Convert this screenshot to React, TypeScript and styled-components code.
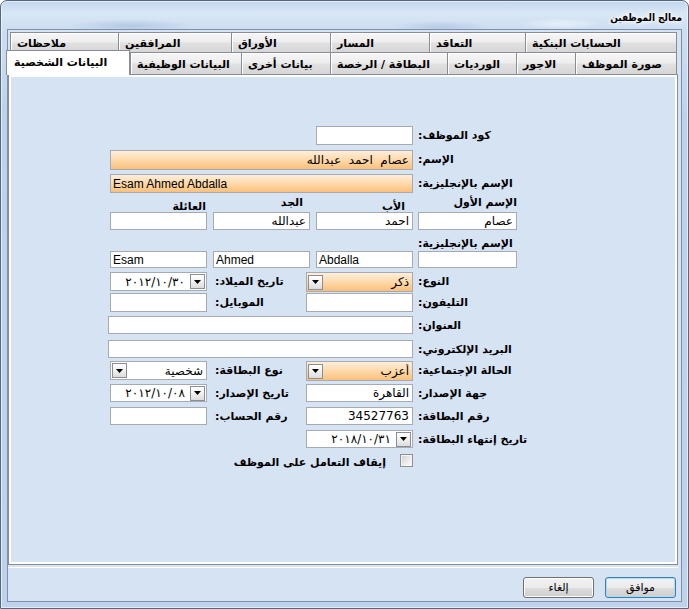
import React from "react";
import styled, { createGlobalStyle } from "styled-components";

const Global = createGlobalStyle`
  html, body { margin: 0; padding: 0; width: 689px; height: 609px; overflow: hidden; background: #fff; }
  body { font-family: "DejaVu Sans", sans-serif; }
  *, *::before, *::after { box-sizing: border-box; }
`;

const orange = "linear-gradient(180deg, #feeedb 0%, #fdd9ab 50%, #fbc07a 100%)";
const arabic = `"DejaVu Sans", sans-serif`;

const Window = styled.div`
  width: 689px;
  height: 609px;
  border: 1px solid #56677f;
  border-radius: 7px 7px 0 0;
  padding: 0 6px 6px 6px;
  display: flex;
  flex-direction: column;
  box-shadow: inset 0 0 0 1px rgba(255, 255, 255, 0.55);
  background:
    radial-gradient(ellipse 90px 10px at 130px 25px, rgba(110, 140, 185, 0.28), transparent 70%),
    radial-gradient(ellipse 70px 9px at 440px 26px, rgba(110, 140, 185, 0.25), transparent 70%),
    radial-gradient(ellipse 60px 8px at 560px 23px, rgba(255, 255, 255, 0.5), transparent 70%),
    linear-gradient(180deg, #c1d6ee 0px, #d9e7f6 12px, #cddef1 28px, #bcd2ea 120px, #bed3eb 100%);
`;

const TitleBar = styled.div`
  height: 28px;
  flex: 0 0 28px;
  display: flex;
  justify-content: flex-end;
  align-items: center;
  padding-top: 5px;
`;

const Title = styled.span`
  font: bold 10px "DejaVu Sans Condensed", "DejaVu Sans", sans-serif;
  font-stretch: condensed;
  color: #000;
  direction: rtl;
  text-shadow: 0 0 6px #fff, 0 0 4px #fff, 0 0 2px #fff;
`;

const Client = styled.div`
  flex: 1;
  border: 1px solid #7d8fa9;
  background: #d6e3f3;
  display: flex;
  flex-direction: column;
  padding: 2px 3px 0 0;
`;

const TabControl = styled.div`
  flex: 1;
  display: flex;
  flex-direction: column;
`;

const TabRow = styled.div<{ $h: number; $ml: number }>`
  display: flex;
  height: ${p => p.$h}px;
  flex: 0 0 ${p => p.$h}px;
  margin-left: ${p => p.$ml}px;
  & > *:last-child { border-right-width: 1px; }
`;

const Tab = styled.div<{ $w: number; $active?: boolean }>`
  position: relative;
  width: ${p => p.$w + (p.$active ? 2 : 0)}px;
  flex: 0 0 auto;
  height: ${p => (p.$active ? "25px" : "100%")};
  margin-left: ${p => (p.$active ? -2 : 0)}px;
  margin-top: ${p => (p.$active ? -2 : 0)}px;
  z-index: ${p => (p.$active ? 2 : 1)};
  border: solid #898c95;
  border-width: 1px 0 0 1px;
  border-right-width: ${p => (p.$active ? 1 : 0)}px;
  background: ${p =>
    p.$active
      ? "#fff"
      : "linear-gradient(180deg, #f6f6f6 0%, #eeeeee 45%, #e0e0e0 55%, #d6d6d6 100%)"};
  box-shadow: ${p => (p.$active ? "none" : "inset 1px 1px 0 #fff")};
  display: flex;
  align-items: center;
  padding: ${p => (p.$active ? "0 0 1px 7px" : "2px 0 0 6px")};
  font: bold 11px ${arabic};
  color: #000;
  white-space: nowrap;
  direction: rtl;
  text-align: left;
  justify-content: flex-end;
`;

const Panel = styled.div`
  flex: 1;
  border: 1px solid #898c95;
  background: #d6e3f3;
  box-shadow: inset 0 0 0 2px #fff;
  padding: 51px 0 0 101px;
`;

const FormGrid = styled.div`
  display: grid;
  grid-template-columns: 97px 6px 93px 4px 6px 97px 5px 99px 1fr;
  grid-template-rows: 24px 24px 22px 16px 22px 17px 21px 21px 23px 24px 21px 23px 23px 23px 22px 18px;
`;

const Label = styled.div<{ $col: string; $row: number; $pl?: number; $h?: number }>`
  grid-column: ${p => p.$col};
  grid-row: ${p => p.$row};
  align-self: start;
  justify-self: start;
  line-height: ${p => p.$h ?? 19}px;
  padding-top: 3px;
  padding-left: ${p => p.$pl ?? 0}px;
  direction: rtl;
  white-space: nowrap;
  font: bold 11px ${arabic};
  color: #000;
`;

const ColHead = styled.div<{ $col: string; $dy: number; $mr: number }>`
  grid-column: ${p => p.$col};
  grid-row: 4;
  justify-self: end;
  align-self: start;
  margin-top: ${p => p.$dy}px;
  margin-right: ${p => p.$mr}px;
  line-height: 14px;
  direction: rtl;
  white-space: nowrap;
  font: bold 11px ${arabic};
  color: #000;
`;

const Input = styled.div<{
  $col: string;
  $row: number;
  $h?: number;
  $tone?: "orange";
  $ltr?: boolean;
  $ml?: number;
}>`
  grid-column: ${p => p.$col};
  grid-row: ${p => p.$row};
  align-self: start;
  height: ${p => p.$h ?? 19}px;
  margin-left: ${p => p.$ml ?? 0}px;
  border: 1px solid #a7abb1;
  background: ${p => (p.$tone === "orange" ? orange : "#fff")};
  display: flex;
  align-items: center;
  justify-content: ${p => (p.$ltr ? "flex-start" : "flex-end")};
  padding: 0 3px 0 2px;
  overflow: hidden;
  white-space: pre;
  color: #000;
  font: ${p => (p.$ltr ? `12px "Liberation Sans", Arial, sans-serif` : `12px ${arabic}`)};
`;

const Combo = styled(Input)<{ $btn: "left" | "right" }>`
  padding: 1px;
  gap: 3px;
  flex-direction: ${p => (p.$btn === "left" ? "row" : "row-reverse")};
`;

const ComboText = styled.span`
  flex: 1;
  text-align: right;
  direction: rtl;
  padding-right: 2px;
  overflow: hidden;
`;

const RtlText = styled.span`
  direction: rtl;
`;

const DropBtn = styled.span`
  flex: 0 0 15px;
  width: 15px;
  height: 15px;
  border: 1px solid #8b8d90;
  background: linear-gradient(180deg, #ffffff 0%, #f0f0f0 50%, #dcdcdc 100%);
  display: flex;
  align-items: center;
  justify-content: center;
`;

const CheckRow = styled.div`
  grid-column: 1 / 7;
  grid-row: 16;
  align-self: start;
  display: flex;
  justify-content: flex-end;
  align-items: center;
  gap: 14px;
  height: 17px;
`;

const CheckBox = styled.span`
  width: 13px;
  height: 13px;
  border: 1px solid #8f8f8f;
  background: linear-gradient(135deg, #cfcfcf 0%, #f2f2f2 70%, #ffffff 100%);
  box-shadow: inset 0 0 0 1px #f4f4f4;
`;

const CheckLabel = styled.span`
  direction: rtl;
  white-space: nowrap;
  font: bold 11px ${arabic};
  color: #000;
  padding-top: 3px;
`;

const Footer = styled.div`
  flex: 0 0 34px;
  margin-top: 2px;
  border-top: 1px solid #fff;
  display: flex;
  justify-content: flex-end;
  align-items: flex-start;
  gap: 11px;
  padding: 9px 2px 0 0;
`;

const Button = styled.button<{ $primary?: boolean }>`
  width: 71px;
  height: 21px;
  border: 1px solid ${p => (p.$primary ? "#3c7fb1" : "#707070")};
  border-radius: 3px;
  background: linear-gradient(180deg, #f2f2f2 0%, #ebebeb 50%, #dddddd 51%, #cfcfcf 100%);
  box-shadow: ${p => (p.$primary ? "inset 0 0 0 1px #a9dcf6" : "inset 0 0 0 1px #fcfcfc")};
  font: 11px ${arabic};
  color: #000;
  direction: rtl;
  padding: 0;
`;

const Arrow = () => (
  <svg width="7" height="4" viewBox="0 0 7 4">
    <polygon points="0,0 7,0 3.5,4" fill="#000" />
  </svg>
);

const topTabs = [
  { t: "ملاحظات", w: 108 },
  { t: "المرافقين", w: 113 },
  { t: "الأوراق", w: 99 },
  { t: "المسار", w: 99 },
  { t: "التعاقد", w: 96 },
  { t: "الحسابات البنكية", w: 152 },
];

const bottomTabs = [
  { t: "البيانات الشخصية", w: 122, active: true },
  { t: "البيانات الوظيفية", w: 111 },
  { t: "بيانات أخرى", w: 89 },
  { t: "البطاقة / الرخصة", w: 117 },
  { t: "الورديات", w: 69 },
  { t: "الاجور", w: 59 },
  { t: "صورة الموظف", w: 102 },
];

export default function App() {
  return (
    <>
      <Global />
      <Window>
        <TitleBar>
          <Title>معالج الموظفين</Title>
        </TitleBar>
        <Client>
          <TabControl>
            <TabRow $h={20} $ml={2}>
              {topTabs.map(t => (
                <Tab key={t.t} $w={t.w}>{t.t}</Tab>
              ))}
            </TabRow>
            <TabRow $h={22} $ml={0}>
              {bottomTabs.map(t => (
                <Tab key={t.t} $w={t.w} $active={t.active}>{t.t}</Tab>
              ))}
            </TabRow>
            <Panel>
              <FormGrid>
                <Label $col="8 / 10" $row={1}>كود الموظف:</Label>
                <Input $col="6 / 7" $row={1} />

                <Label $col="8 / 10" $row={2} $h={20}>الإسم:</Label>
                <Input $col="1 / 7" $row={2} $h={20} $tone="orange">
                  <RtlText>عصام  احمد  عبدالله</RtlText>
                </Input>

                <Label $col="8 / 10" $row={3}>الإسم بالإنجليزية:</Label>
                <Input $col="1 / 7" $row={3} $tone="orange" $ltr>Esam Ahmed Abdalla</Input>

                <ColHead $col="8 / 9" $dy={0} $mr={0}>الإسم الأول</ColHead>
                <ColHead $col="6 / 7" $dy={4} $mr={8}>الأب</ColHead>
                <ColHead $col="3 / 5" $dy={0} $mr={7}>الجد</ColHead>
                <ColHead $col="1 / 2" $dy={4} $mr={1}>العائلة</ColHead>

                <Input $col="8 / 9" $row={5} $h={18}><RtlText>عصام</RtlText></Input>
                <Input $col="6 / 7" $row={5} $h={18}><RtlText>احمد</RtlText></Input>
                <Input $col="3 / 5" $row={5} $h={18}><RtlText>عبدالله</RtlText></Input>
                <Input $col="1 / 2" $row={5} $h={18} />

                <Label $col="8 / 10" $row={6} $h={17}>الإسم بالإنجليزية:</Label>

                <Input $col="8 / 9" $row={7} $h={17} $ltr />
                <Input $col="6 / 7" $row={7} $h={17} $ltr>Abdalla</Input>
                <Input $col="3 / 5" $row={7} $h={17} $ltr>Ahmed</Input>
                <Input $col="1 / 2" $row={7} $h={17} $ltr>Esam</Input>

                <Label $col="8 / 10" $row={8} $h={20}>النوع:</Label>
                <Combo $col="4 / 7" $row={8} $h={20} $tone="orange" $btn="left">
                  <DropBtn><Arrow /></DropBtn>
                  <ComboText>ذكر</ComboText>
                </Combo>
                <Label $col="3 / 5" $row={8} $pl={2}>تاريخ الميلاد:</Label>
                <Combo $col="1 / 2" $row={8} $btn="right">
                  <DropBtn><Arrow /></DropBtn>
                  <ComboText>٢٠١٢/١٠/٣٠</ComboText>
                </Combo>

                <Label $col="8 / 10" $row={9}>التليفون:</Label>
                <Input $col="4 / 7" $row={9} />
                <Label $col="3 / 5" $row={9} $pl={2}>الموبايل:</Label>
                <Input $col="1 / 2" $row={9} />

                <Label $col="8 / 10" $row={10} $h={18}>العنوان:</Label>
                <Input $col="1 / 7" $row={10} $h={18} $ml={-2} />

                <Label $col="8 / 10" $row={11} $h={18}>البريد الإلكتروني:</Label>
                <Input $col="1 / 7" $row={11} $h={18} $ml={-2} />

                <Label $col="8 / 10" $row={12} $h={20}>الحالة الإجتماعية:</Label>
                <Combo $col="4 / 7" $row={12} $h={20} $tone="orange" $btn="left">
                  <DropBtn><Arrow /></DropBtn>
                  <ComboText>أعزب</ComboText>
                </Combo>
                <Label $col="3 / 5" $row={12} $pl={2}>نوع البطاقة:</Label>
                <Combo $col="1 / 2" $row={12} $btn="left">
                  <DropBtn><Arrow /></DropBtn>
                  <ComboText>شخصية</ComboText>
                </Combo>

                <Label $col="8 / 10" $row={13} $h={18}>جهة الإصدار:</Label>
                <Input $col="4 / 7" $row={13} $h={18}><RtlText>القاهرة</RtlText></Input>
                <Label $col="3 / 5" $row={13} $pl={2} $h={18}>تاريخ الإصدار:</Label>
                <Combo $col="1 / 2" $row={13} $h={18} $btn="right">
                  <DropBtn><Arrow /></DropBtn>
                  <ComboText>٢٠١٢/١٠/٠٨</ComboText>
                </Combo>

                <Label $col="8 / 10" $row={14} $h={18}>رقم البطاقة:</Label>
                <Input $col="4 / 7" $row={14} $h={18}>34527763</Input>
                <Label $col="3 / 5" $row={14} $pl={2} $h={18}>رقم الحساب:</Label>
                <Input $col="1 / 2" $row={14} $h={18} />

                <Label $col="8 / 10" $row={15} $h={18}>تاريخ إنتهاء البطاقة:</Label>
                <Combo $col="4 / 7" $row={15} $h={18} $btn="right">
                  <DropBtn><Arrow /></DropBtn>
                  <ComboText>٢٠١٨/١٠/٣١</ComboText>
                </Combo>

                <CheckRow>
                  <CheckLabel>إيقاف التعامل على الموظف</CheckLabel>
                  <CheckBox />
                </CheckRow>
              </FormGrid>
            </Panel>
          </TabControl>
          <Footer>
            <Button>إلغاء</Button>
            <Button $primary>موافق</Button>
          </Footer>
        </Client>
      </Window>
    </>
  );
}
